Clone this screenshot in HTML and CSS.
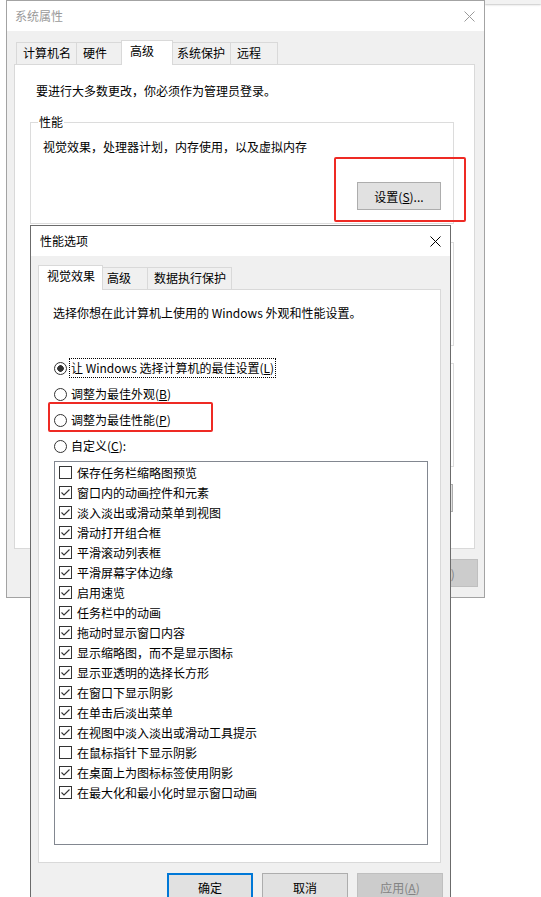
FILE: index.html
```html
<!DOCTYPE html>
<html lang="zh-CN">
<head>
<meta charset="utf-8">
<title>系统属性 - 性能选项</title>
<link rel="stylesheet" href="styles.css">
</head>
<body>
<div class="desktop">
  <div class="bgstrip"></div>

  <section class="win win-outer">
    <header class="titlebar">
      <span class="title">系统属性</span>
      <svg class="close" width="11" height="11" viewBox="0 0 11 11"><path d="M0.5 0.5 L10.5 10.5 M10.5 0.5 L0.5 10.5"/></svg>
    </header>
    <div class="winbody">
      <div class="tabs">
        <span class="tab">计算机名</span>
        <span class="tab">硬件</span>
        <span class="tab active">高级</span>
        <span class="tab">系统保护</span>
        <span class="tab">远程</span>
      </div>
      <div class="panel outer-panel">
        <p class="notice">要进行大多数更改，你必须作为管理员登录。</p>
        <fieldset class="group g-perf">
          <legend>性能</legend>
          <p class="gdesc">视觉效果，处理器计划，内存使用，以及虚拟内存</p>
          <div class="grow"><button class="btn btn-set">设置(<u>S</u>)...</button></div>
        </fieldset>
        <div class="box box-profile"></div>
        <div class="box box-startup"></div>
        <div class="envrow"><span class="btn btn-set btn-blank"></span></div>
      </div>
      <div class="btnrow outer-btns">
        <span class="btn btn-blank"></span>
        <span class="btn btn-blank"></span>
        <button class="btn disabled">应用(<u>A</u>)</button>
      </div>
    </div>
  </section>

  <section class="win win-inner">
    <header class="titlebar">
      <span class="title">性能选项</span>
      <svg class="close" width="11" height="11" viewBox="0 0 11 11"><path d="M0.5 0.5 L10.5 10.5 M10.5 0.5 L0.5 10.5"/></svg>
    </header>
    <div class="winbody">
      <div class="tabs">
        <span class="tab active">视觉效果</span>
        <span class="tab">高级</span>
        <span class="tab">数据执行保护</span>
      </div>
      <div class="panel inner-panel">
        <p class="desc">选择你想在此计算机上使用的 Windows 外观和性能设置。</p>
        <div class="radios">
          <div class="radio"><span class="rb checked"></span><span class="rl focus">让 Windows 选择计算机的最佳设置(<u>L</u>)</span></div>
          <div class="radio"><span class="rb"></span><span class="rl">调整为最佳外观(<u>B</u>)</span></div>
          <div class="radio"><span class="rb"></span><span class="rl">调整为最佳性能(<u>P</u>)</span></div>
          <div class="radio"><span class="rb"></span><span class="rl">自定义(<u>C</u>):</span></div>
        </div>
        <ul class="listbox">
          <li><span class="cb"></span>保存任务栏缩略图预览</li>
          <li><span class="cb"><svg viewBox="0 0 11 11"><polyline points="1.5,5.5 4,8 9.5,2.5"/></svg></span>窗口内的动画控件和元素</li>
          <li><span class="cb"><svg viewBox="0 0 11 11"><polyline points="1.5,5.5 4,8 9.5,2.5"/></svg></span>淡入淡出或滑动菜单到视图</li>
          <li><span class="cb"><svg viewBox="0 0 11 11"><polyline points="1.5,5.5 4,8 9.5,2.5"/></svg></span>滑动打开组合框</li>
          <li><span class="cb"><svg viewBox="0 0 11 11"><polyline points="1.5,5.5 4,8 9.5,2.5"/></svg></span>平滑滚动列表框</li>
          <li><span class="cb"><svg viewBox="0 0 11 11"><polyline points="1.5,5.5 4,8 9.5,2.5"/></svg></span>平滑屏幕字体边缘</li>
          <li><span class="cb"><svg viewBox="0 0 11 11"><polyline points="1.5,5.5 4,8 9.5,2.5"/></svg></span>启用速览</li>
          <li><span class="cb"><svg viewBox="0 0 11 11"><polyline points="1.5,5.5 4,8 9.5,2.5"/></svg></span>任务栏中的动画</li>
          <li><span class="cb"><svg viewBox="0 0 11 11"><polyline points="1.5,5.5 4,8 9.5,2.5"/></svg></span>拖动时显示窗口内容</li>
          <li><span class="cb"><svg viewBox="0 0 11 11"><polyline points="1.5,5.5 4,8 9.5,2.5"/></svg></span>显示缩略图，而不是显示图标</li>
          <li><span class="cb"><svg viewBox="0 0 11 11"><polyline points="1.5,5.5 4,8 9.5,2.5"/></svg></span>显示亚透明的选择长方形</li>
          <li><span class="cb"><svg viewBox="0 0 11 11"><polyline points="1.5,5.5 4,8 9.5,2.5"/></svg></span>在窗口下显示阴影</li>
          <li><span class="cb"><svg viewBox="0 0 11 11"><polyline points="1.5,5.5 4,8 9.5,2.5"/></svg></span>在单击后淡出菜单</li>
          <li><span class="cb"><svg viewBox="0 0 11 11"><polyline points="1.5,5.5 4,8 9.5,2.5"/></svg></span>在视图中淡入淡出或滑动工具提示</li>
          <li><span class="cb"></span>在鼠标指针下显示阴影</li>
          <li><span class="cb"><svg viewBox="0 0 11 11"><polyline points="1.5,5.5 4,8 9.5,2.5"/></svg></span>在桌面上为图标标签使用阴影</li>
          <li><span class="cb"><svg viewBox="0 0 11 11"><polyline points="1.5,5.5 4,8 9.5,2.5"/></svg></span>在最大化和最小化时显示窗口动画</li>
        </ul>
      </div>
      <div class="btnrow inner-btns">
        <button class="btn default">确定</button>
        <button class="btn">取消</button>
        <button class="btn disabled">应用(<u>A</u>)</button>
      </div>
    </div>
  </section>

  <div class="mark mark-settings"></div>
  <div class="mark mark-perf"></div>
</div>
</body>
</html>
```

FILE: styles.css
```css
html, body {
  margin: 0;
  padding: 0;
  overflow: hidden;
  background: #fff;
}

body {
  font-family: "Microsoft YaHei", "Noto Sans CJK SC", sans-serif;
  font-size: 12px;
  color: #000;
}

.desktop {
  position: relative;
  width: 541px;
  height: 897px;
  overflow: hidden;
  background: #fff;
}

.bgstrip {
  position: absolute;
  top: 0;
  left: 485px;
  right: 0;
  height: 4px;
  background: #f2f2f2;
  box-shadow: 0 1px 2px rgba(0, 0, 0, 0.22);
}

/* windows */
.win {
  position: absolute;
  box-sizing: border-box;
  background: #f0f0f0;
}

.win-outer {
  left: 6px;
  top: 0;
  width: 479px;
  height: 598px;
  border: 1px solid #a3a3a3;
}

.win-inner {
  left: 30px;
  top: 225px;
  width: 421px;
  height: 720px;
  border: 1px solid #6b6b6b;
  z-index: 2;
}

.titlebar {
  display: flex;
  align-items: center;
  height: 30px;
  background: #fff;
  padding: 0 9px 0 8px;
}

.win-inner .titlebar {
  padding-left: 9px;
}

.title {
  flex: 1;
  line-height: 16px;
}

.win-outer .title {
  color: #9a9a9a;
}

.close {
  display: block;
  fill: none;
  stroke: #000;
  stroke-width: 1;
}

.win-outer .close {
  stroke: #9a9a9a;
}

.winbody {
  padding: 9px 9px 0 7px;
}

/* tabs */
.tabs {
  display: flex;
  align-items: flex-end;
  height: 24px;
  padding-left: 2px;
}

.tab {
  box-sizing: border-box;
  height: 22px;
  min-width: 48px;
  padding: 0 5px 0 6px;
  border: 1px solid #d9d9d9;
  border-bottom: 0;
  margin-right: -1px;
  background: #f0f0f0;
  line-height: 20px;
  white-space: nowrap;
}

.tab.active {
  position: relative;
  z-index: 1;
  height: 25px;
  min-width: 52px;
  padding: 0 7px 0 8px;
  margin: 0 -3px -1px -2px;
  background: #fff;
}

.panel {
  box-sizing: border-box;
  background: #fff;
  border: 1px solid #d9d9d9;
}

.outer-panel {
  height: 485px;
  padding-top: 18px;
}

.inner-panel {
  height: 574px;
  padding-top: 15px;
}

p {
  margin: 0;
  line-height: 16px;
}

.notice {
  padding-left: 21px;
}

/* group boxes */
.group {
  margin: 15px 20px 0 15px;
  padding: 0 12px 13px;
  border: 1px solid #dcdcdc;
  min-width: 0;
}

.group legend {
  padding: 0 1px;
  margin-left: -5px;
  line-height: 16px;
}

.gdesc {
  margin-top: 9px;
}

.grow {
  display: flex;
  justify-content: flex-end;
  margin-top: 27px;
}

.box {
  box-sizing: border-box;
  height: 104px;
  margin: 18px 20px 0 15px;
  border: 1px solid #dcdcdc;
}

.box-startup {
  margin-top: 17px;
}

.envrow {
  display: flex;
  justify-content: flex-end;
  margin: 17px 21px 0 0;
}

/* buttons */
.btn {
  box-sizing: border-box;
  display: inline-block;
  width: 86px;
  height: 28px;
  padding: 0;
  background: #e1e1e1;
  border: 1px solid #adadad;
  font: inherit;
  color: #000;
}

.btn-set {
  width: 84px;
}

.btn.default {
  border: 2px solid #0078d7;
}

.btn.disabled {
  background: #cccccc;
  border-color: #bfbfbf;
  color: #838383;
}

.btnrow {
  display: flex;
  justify-content: flex-end;
  gap: 9px;
  margin-top: 10px;
}

.outer-btns {
  margin-right: -3px;
  gap: 8px;
}

.inner-btns {
  margin-right: -2px;
}

/* inner dialog content */
.desc {
  padding-left: 14px;
}

.radios {
  margin-top: 34px;
  padding-left: 15px;
}

.radio {
  display: flex;
  align-items: center;
  height: 26px;
}

.rb {
  box-sizing: border-box;
  width: 13px;
  height: 13px;
  border: 1px solid #333;
  border-radius: 50%;
  background: #fff;
  flex: none;
}

.rb.checked {
  background: radial-gradient(circle, #333 0 3px, #fff 3.6px);
}

.rl {
  margin-left: 4px;
  line-height: 16px;
  white-space: nowrap;
}

.rl.focus {
  margin-left: 2px;
  padding: 1px 1px;
  border: 1px dotted #000;
}

.listbox {
  box-sizing: border-box;
  list-style: none;
  margin: 2px 12px 0 15px;
  padding: 0 0 0 4px;
  height: 384px;
  border: 1px solid #828790;
  background: #fff;
}

.listbox li {
  display: flex;
  align-items: center;
  height: 20px;
  white-space: nowrap;
}

.cb {
  box-sizing: border-box;
  display: flex;
  align-items: center;
  justify-content: center;
  width: 13px;
  height: 13px;
  margin-right: 5px;
  border: 1px solid #333;
  background: #fff;
  flex: none;
}

.cb svg {
  display: block;
  width: 11px;
  height: 11px;
  fill: none;
  stroke: #333;
  stroke-width: 1.1;
}

/* red annotations */
.mark {
  position: absolute;
  box-sizing: border-box;
  border: 2px solid #ee2a24;
  border-radius: 2px;
  z-index: 5;
}

.mark-settings {
  left: 334px;
  top: 157px;
  width: 132px;
  height: 65px;
}

.mark-perf {
  left: 48px;
  top: 402px;
  width: 165px;
  height: 30px;
}
```
